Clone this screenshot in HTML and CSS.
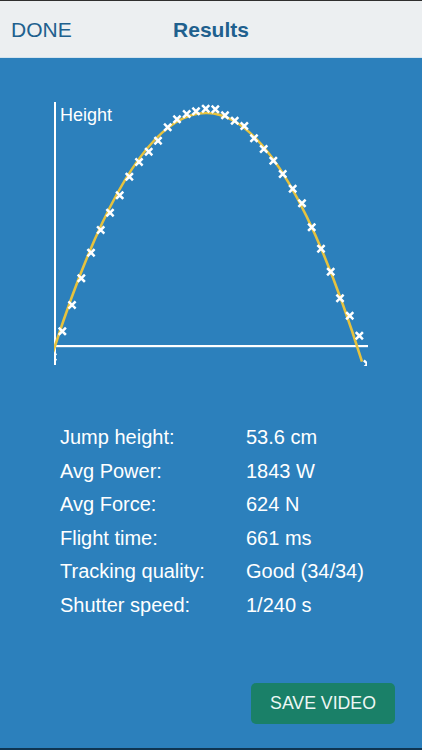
FILE: index.html
```html
<!DOCTYPE html>
<html>
<head>
<meta charset="utf-8">
<link rel="stylesheet" href="styles.css">
</head>
<body>
<div class="screen">
  <header class="header">
    <span class="done">DONE</span>
    <span class="title">Results</span>
    <span></span>
  </header>
  <main class="main">
    <svg class="chart" width="422" height="332" viewBox="0 58 422 332" xmlns="http://www.w3.org/2000/svg">
      <defs>
        <clipPath id="area"><rect x="54" y="95" width="313" height="271"/></clipPath>
        <path id="m" d="M-2.7 -2.7 L2.7 2.7 M2.7 -2.7 L-2.7 2.7" stroke="#ffffff" stroke-width="2.5" stroke-linecap="square" fill="none"/>
      </defs>
      <rect x="54" y="102" width="2" height="263" fill="#ffffff"/>
      <rect x="54" y="345" width="314" height="2.2" fill="#ffffff"/>
      <text class="axis-label" x="60" y="121">Height</text>
      <g clip-path="url(#area)">
        <path d="M53 352.2 Q207.5 -130.9 362 361.7" stroke="#e6c23e" stroke-width="2.6" fill="none"/>
        <use href="#m" x="52.6" y="357"/>
        <use href="#m" x="62.3" y="331.3"/>
        <use href="#m" x="72" y="305"/>
        <use href="#m" x="81.3" y="278.3"/>
        <use href="#m" x="91" y="252.7"/>
        <use href="#m" x="100.7" y="230"/>
        <use href="#m" x="110" y="212.7"/>
        <use href="#m" x="119.7" y="195.3"/>
        <use href="#m" x="129.3" y="176.7"/>
        <use href="#m" x="139" y="162"/>
        <use href="#m" x="148.7" y="151.7"/>
        <use href="#m" x="158" y="140.7"/>
        <use href="#m" x="167.7" y="127.3"/>
        <use href="#m" x="177" y="119.3"/>
        <use href="#m" x="186.7" y="114"/>
        <use href="#m" x="196" y="111.3"/>
        <use href="#m" x="205.7" y="108.7"/>
        <use href="#m" x="215.3" y="109.3"/>
        <use href="#m" x="225" y="115.3"/>
        <use href="#m" x="234.7" y="120.7"/>
        <use href="#m" x="244.3" y="126"/>
        <use href="#m" x="254" y="138.3"/>
        <use href="#m" x="263.7" y="149"/>
        <use href="#m" x="273.3" y="160.7"/>
        <use href="#m" x="282.7" y="174"/>
        <use href="#m" x="292.7" y="188.7"/>
        <use href="#m" x="302" y="203.3"/>
        <use href="#m" x="311.7" y="227.3"/>
        <use href="#m" x="321" y="248.7"/>
        <use href="#m" x="330.7" y="271.7"/>
        <use href="#m" x="340" y="298.3"/>
        <use href="#m" x="349.7" y="315.7"/>
        <use href="#m" x="359.3" y="335.7"/>
        <use href="#m" x="367.5" y="364"/>
      </g>
    </svg>
    <div class="stats">
      <span>Jump height:</span><span>53.6 cm</span>
      <span>Avg Power:</span><span>1843 W</span>
      <span>Avg Force:</span><span>624 N</span>
      <span>Flight time:</span><span>661 ms</span>
      <span>Tracking quality:</span><span>Good (34/34)</span>
      <span>Shutter speed:</span><span>1/240 s</span>
    </div>
    <div class="actions">
      <button class="save">SAVE VIDEO</button>
    </div>
  </main>
</div>
</body>
</html>
```
FILE: styles.css
```css
html, body {
  margin: 0;
  padding: 0;
}
body {
  width: 422px;
  height: 750px;
  overflow: hidden;
  font-family: "Liberation Sans", Arial, sans-serif;
  background: #2c80bc;
}
.screen {
  display: flex;
  flex-direction: column;
  height: 750px;
  border-top: 1px solid #2f2f2f;
  box-sizing: border-box;
}
.header {
  height: 56px;
  flex: none;
  box-sizing: border-box;
  padding: 2px 11px 0 11px;
  background: #eceff1;
  border-bottom: 1px solid #d3e3ee;
  display: grid;
  grid-template-columns: 1fr auto 1fr;
  align-items: center;
  color: #20608e;
  font-size: 21px;
}
.header {
  height: 57px;
}
.done {
  font-weight: normal;
}
.title {
  font-weight: bold;
}
.main {
  flex: 1;
  background: #2c80bc;
  border-bottom: 2px solid #0f3552;
  display: flex;
  flex-direction: column;
}
.chart {
  display: block;
  flex: none;
}
.axis-label {
  fill: #ffffff;
  font-family: "Liberation Sans", Arial, sans-serif;
  font-size: 18px;
}
.stats {
  margin-top: 31px;
  padding-left: 60px;
  display: grid;
  grid-template-columns: 186px auto;
  line-height: 33.6px;
  font-size: 20px;
  color: #ffffff;
}
.actions {
  display: flex;
  justify-content: flex-end;
  padding-right: 27px;
  margin-top: 60px;
}
.save {
  width: 144px;
  height: 41px;
  border: none;
  border-radius: 5px;
  background: #1a8068;
  color: #eef7f4;
  font-family: "Liberation Sans", Arial, sans-serif;
  font-size: 17.7px;
  padding: 0;
}
```
